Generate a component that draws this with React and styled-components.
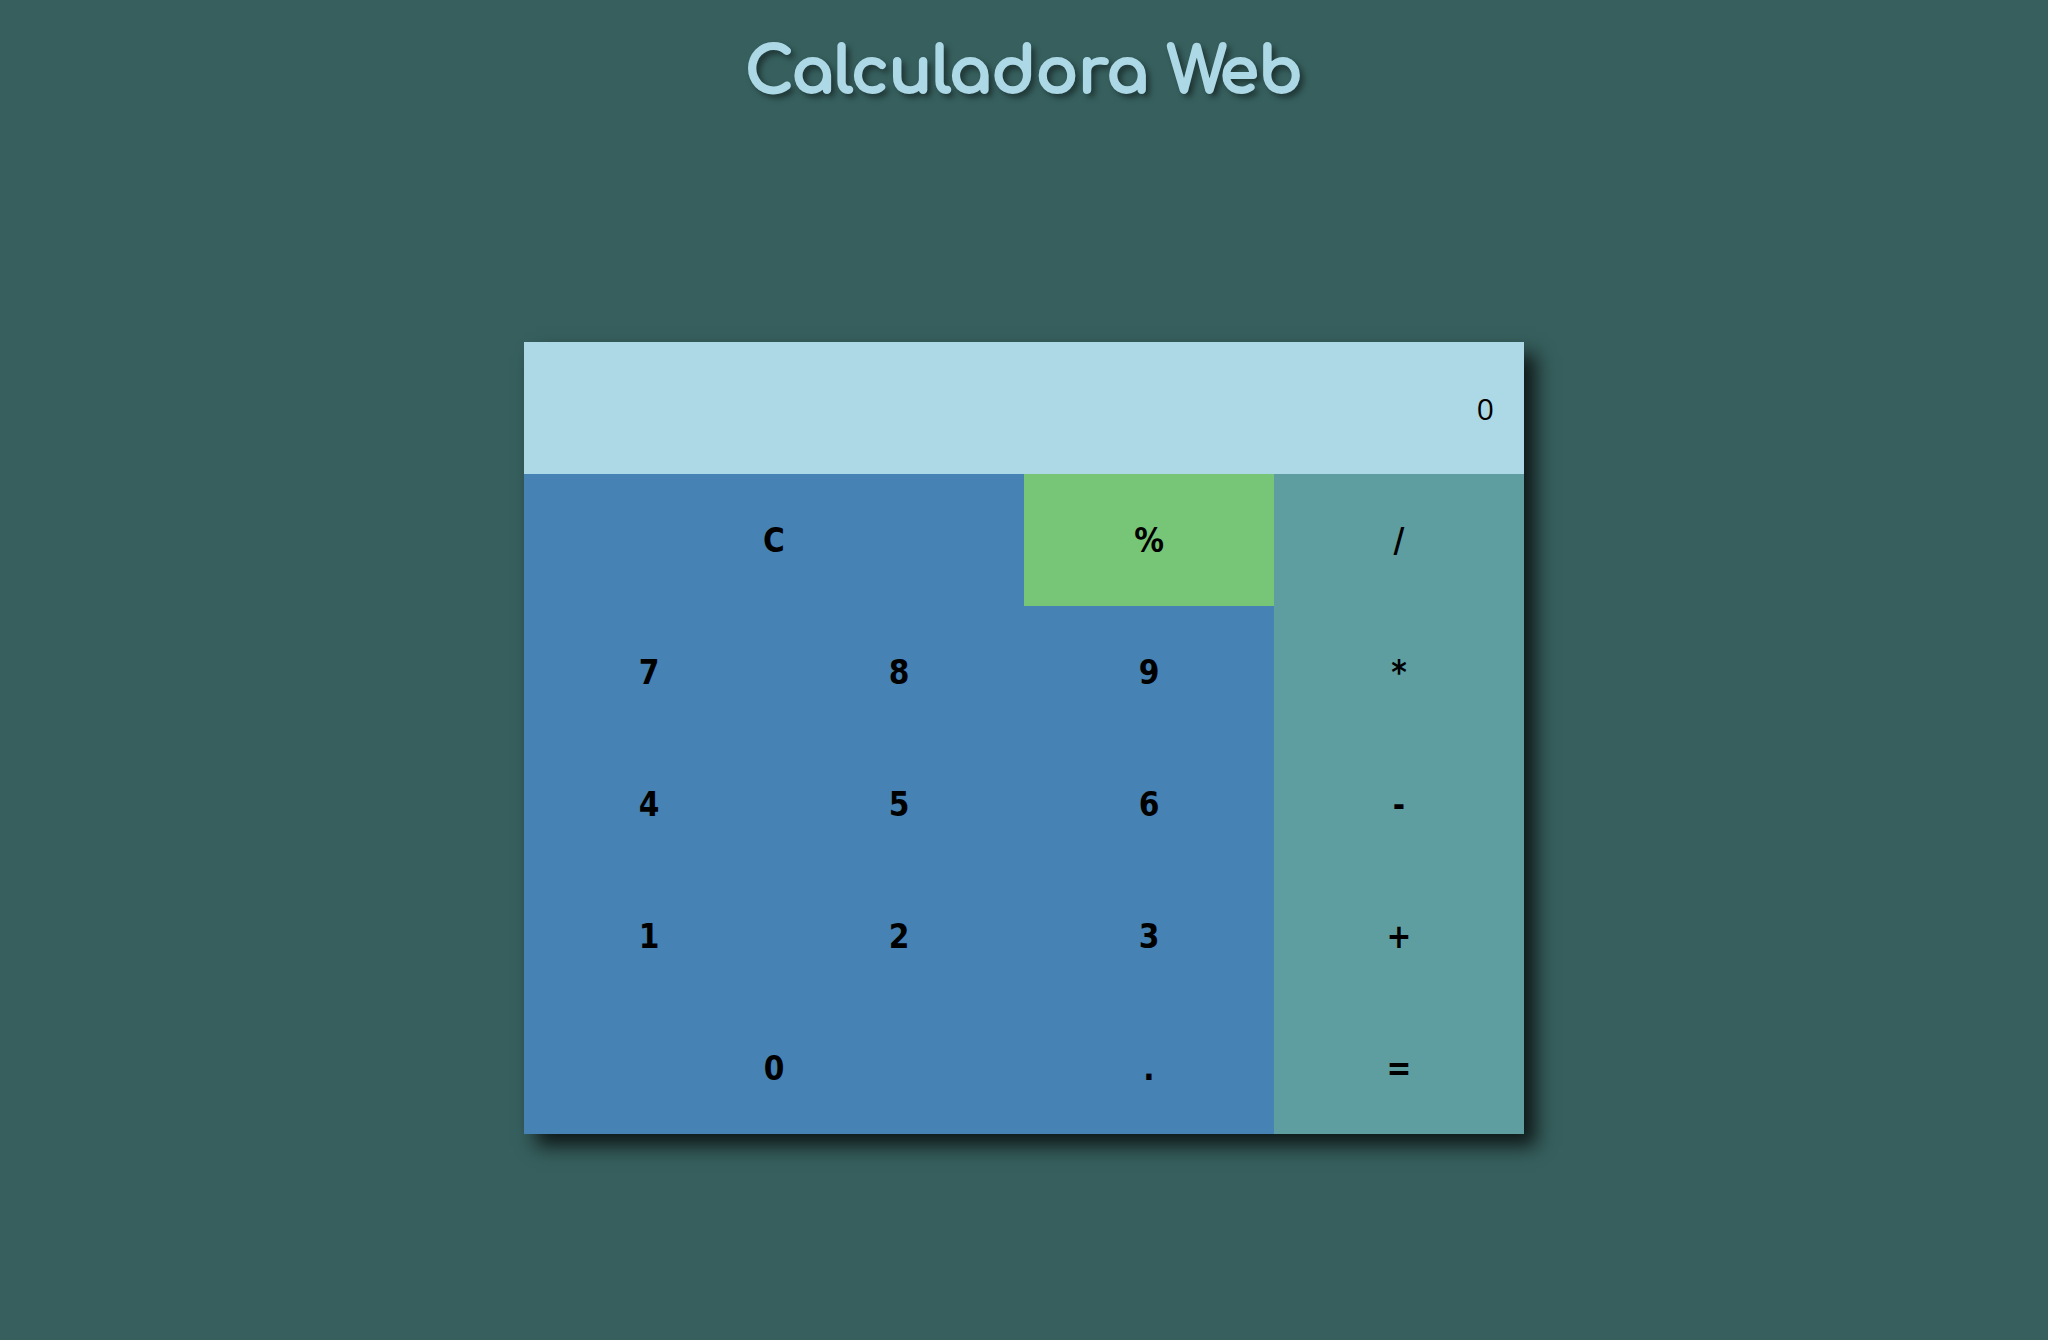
import styled, { createGlobalStyle } from "styled-components";

const GlobalStyle = createGlobalStyle`
  body {
    margin: 0;
    background: #365f5d;
    font-family: "DejaVu Sans", sans-serif;
  }
`;

const Page = styled.div`
  display: flex;
  flex-direction: column;
  align-items: center;
  min-height: 1340px;
`;

const Title = styled.h1`
  margin: 35px 0 0;
  font-family: "Comfortaa", "DejaVu Sans", sans-serif;
  font-size: 63px;
  line-height: 76px;
  font-weight: bold;
  color: #add8e6;
  -webkit-text-stroke: 2px #add8e6;
  text-shadow: 4px 4px 6px rgba(0, 0, 0, 0.55);
`;

const Calculator = styled.div`
  margin-top: 231px;
  display: grid;
  grid-template-columns: repeat(4, 250px);
  grid-auto-rows: 132px;
  box-shadow: 12px 12px 18px rgba(0, 0, 0, 0.75);
`;

const Display = styled.div`
  grid-column: span 4;
  background: #add8e6;
  display: flex;
  align-items: center;
  justify-content: flex-end;
  padding-right: 30px;
  font-family: "Open Sans", sans-serif;
  font-size: 30px;
  color: #000;
`;

const Key = styled.button`
  grid-column: span ${(p) => p.$span || 1};
  border: none;
  margin: 0;
  padding: 0;
  background: ${(p) =>
    p.$kind === "op" ? "#5f9ea0" : p.$kind === "pct" ? "#77c577" : "#4682b4"};
  font-family: "DejaVu Sans", sans-serif;
  font-stretch: condensed;
  font-size: 33px;
  font-weight: bold;
  color: #000;
  cursor: pointer;
`;

const keys = [
  { label: "C", span: 2 },
  { label: "%", kind: "pct" },
  { label: "/", kind: "op" },
  { label: "7" },
  { label: "8" },
  { label: "9" },
  { label: "*", kind: "op" },
  { label: "4" },
  { label: "5" },
  { label: "6" },
  { label: "-", kind: "op" },
  { label: "1" },
  { label: "2" },
  { label: "3" },
  { label: "+", kind: "op" },
  { label: "0", span: 2 },
  { label: "." },
  { label: "=", kind: "op" },
];

export default function App() {
  return (
    <Page>
      <GlobalStyle />
      <Title>Calculadora Web</Title>
      <Calculator>
        <Display>0</Display>
        {keys.map((k) => (
          <Key key={k.label} $span={k.span} $kind={k.kind}>
            {k.label}
          </Key>
        ))}
      </Calculator>
    </Page>
  );
}
